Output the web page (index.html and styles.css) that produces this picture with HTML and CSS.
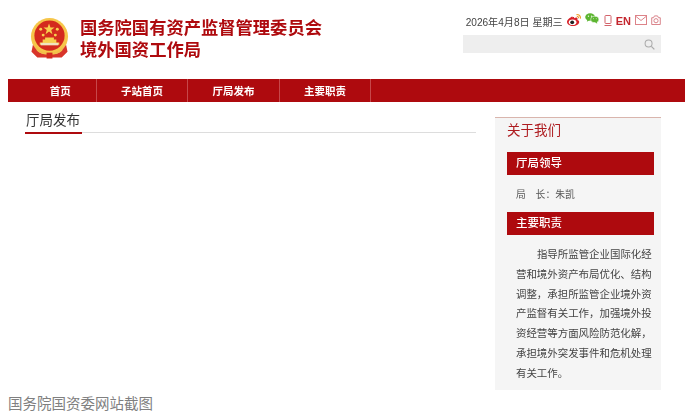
FILE: index.html
```html
<!DOCTYPE html>
<html lang="zh-CN">
<head>
<meta charset="utf-8">
<title>国务院国资委网站截图</title>
<link rel="stylesheet" href="styles.css">
</head>
<body>
<div class="shot">
  <header class="top">
    <div class="brand">
      <svg class="emblem" viewBox="0 0 40 42" aria-hidden="true">
        <circle cx="20" cy="18.500" r="19" fill="#f6c64a"/>
        <circle cx="20" cy="17.500" r="15.500" fill="#d42a1e"/>
        <polygon points="19.500,5 21,9.200 25.200,9.200 21.800,11.800 23,16 19.500,13.400 16,16 17.200,11.800 13.800,9.200 18,9.200" fill="#f8d04e"/>
        <circle cx="11" cy="11" r="1.500" fill="#f8d04e"/>
        <circle cx="28" cy="11" r="1.500" fill="#f8d04e"/>
        <circle cx="13.500" cy="17" r="1.500" fill="#f8d04e"/>
        <circle cx="26" cy="17" r="1.500" fill="#f8d04e"/>
        <path d="M10 27h20v-2.500h-3v-3h-2.500v-2h-9v2H13v3h-3z" fill="#f8d04e"/>
        <rect x="11" y="25" width="18" height="2.500" fill="#f0e4c0"/>
        <path d="M3 27c3 5 6 8 10 9h14c4-1 7-4 10-9l1.500 7-6 6H7.500l-6-6z" fill="#d8352a"/>
        <path d="M6 28c3 5 7 7 14 7s11-2 14-7l-1 5c-3 3-7 4-13 4s-10-1-13-4z" fill="#f2bf4a"/>
        <rect x="17" y="35" width="6" height="6" fill="#d42a1e"/>
      </svg>
      <h1 class="site-title">国务院国有资产监督管理委员会<br>境外国资工作局</h1>
    </div>
    <div class="tools">
      <div class="meta">
        <span class="date">2026年4月8日 星期三</span>
        <svg class="ico weibo" viewBox="0 0 14 12" aria-hidden="true">
          <path d="M5.500 2.500C3 3.300 0 5.800 0 8c0 2.200 2.700 4 5.800 4 3.700 0 6.400-2 6.400-4.100 0-1.300-1.200-1.800-1.800-1.900.3-.9.300-1.600-.1-2-.7-.7-2-.3-3.100.2 0-1-.4-1.500-1.700-.7z" fill="#d8232a"/>
          <ellipse cx="5.600" cy="8.200" rx="3.800" ry="2.800" fill="#fff"/>
          <circle cx="5.200" cy="8.300" r="1.900" fill="#222"/>
          <path d="M9.500 .6c2.400-.3 4.300 1.400 4 4M9.800 2.400c1.200-.1 2 .8 1.900 2" fill="none" stroke="#f0a030" stroke-width="1.100"/>
        </svg>
        <svg class="ico wechat" viewBox="0 0 15 11" aria-hidden="true">
          <ellipse cx="5.500" cy="4" rx="5.300" ry="4" fill="#5cb531"/>
          <path d="M2.500 6.500 2 9l3-2z" fill="#5cb531"/>
          <ellipse cx="10.500" cy="6.500" rx="4.300" ry="3.400" fill="#5cb531" stroke="#fff" stroke-width=".6"/>
          <path d="M12.500 9l.6 2-2.400-1.500z" fill="#5cb531"/>
          <circle cx="3.700" cy="3" r=".7" fill="#fff"/>
          <circle cx="7" cy="3" r=".7" fill="#fff"/>
          <circle cx="9" cy="5.800" r=".5" fill="#fff"/>
          <circle cx="12" cy="5.800" r=".5" fill="#fff"/>
        </svg>
        <svg class="ico phone" viewBox="0 0 8 11" aria-hidden="true">
          <rect x="1" y=".5" width="6" height="8" rx=".8" fill="none" stroke="#d2636b" stroke-width="1"/>
          <path d="M.5 10.500h7" stroke="#d2636b" stroke-width="1"/>
        </svg>
        <span class="en">EN</span>
        <svg class="ico mail" viewBox="0 0 12 10" aria-hidden="true">
          <rect x=".5" y=".5" width="11" height="9" fill="none" stroke="#dd8389" stroke-width="1"/>
          <path d="M1 1.500 6 5.500l5-4" fill="none" stroke="#dd8389" stroke-width="1"/>
        </svg>
        <svg class="ico cam" viewBox="0 0 11 11" aria-hidden="true">
          <path d="M.8 3h2L3.800 1h3.400l1 2h2v7.500H.8z" fill="none" stroke="#d98289" stroke-width="1.100"/>
          <circle cx="5.500" cy="6.300" r="2.300" fill="none" stroke="#d98289" stroke-width="1.100"/>
        </svg>
      </div>
      <div class="search">
        <svg class="search-ico" viewBox="0 0 12 12" aria-hidden="true">
          <circle cx="5" cy="5" r="3.800" fill="none" stroke="#aaa" stroke-width="1.100"/>
          <path d="M8 8l3.300 3.300" stroke="#aaa" stroke-width="1.400"/>
        </svg>
      </div>
    </div>
  </header>
  <nav class="nav">
    <a class="nav-item first">首页</a>
    <a class="nav-item">子站首页</a>
    <a class="nav-item">厅局发布</a>
    <a class="nav-item">主要职责</a>
  </nav>
  <div class="main">
    <section class="content">
      <div class="tab-line"><h2 class="tab">厅局发布</h2></div>
    </section>
    <aside class="side">
      <h3 class="side-title">关于我们</h3>
      <div class="side-bar">厅局领导</div>
      <p class="leader">局&emsp;长：朱凯</p>
      <div class="side-bar">主要职责</div>
      <p class="duty">指导所监管企业国际化经营和境外资产布局优化、结构调整，承担所监管企业境外资产监督有关工作，加强境外投资经营等方面风险防范化解，承担境外突发事件和危机处理有关工作。</p>
    </aside>
  </div>
</div>
<p class="caption">国务院国资委网站截图</p>
</body>
</html>
```
FILE: styles.css
```css
* { box-sizing: border-box; }
html, body { margin: 0; padding: 0; }
body {
  width: 697px;
  height: 420px;
  overflow: hidden;
  padding-left: 8px;
  background: #fff;
  font-family: "Liberation Sans", "Noto Sans CJK SC", sans-serif;
}
h1, h2, h3, p { margin: 0; }
.shot { width: 677px; filter: blur(.35px); }
.top {
  height: 79px;
  display: flex;
  justify-content: space-between;
  padding: 17px 24px 0 22px;
}
.brand { display: flex; gap: 11px; align-items: flex-start; }
.emblem { width: 39px; height: 42px; margin-top: 1px; }
.site-title {
  font-size: 17.300px;
  line-height: 22px;
  font-weight: 700;
  color: #ae0a0e;
}
.tools { width: 198px; margin-top: -5px; display: flex; flex-direction: column; gap: 5px; }
.meta {
  height: 18px;
  display: flex;
  align-items: center;
  justify-content: flex-end;
  gap: 4px;
}
.date { font-size: 10.100px; color: #444; white-space: nowrap; }
.ico { display: block; flex: none; margin-top: -2px; }
.weibo { width: 14px; height: 12px; }
.wechat { width: 14px; height: 11px; margin-top: -5px; }
.phone { width: 8px; height: 11px; margin-left: 1px; }
.en { font-size: 11px; font-weight: 700; color: #c4262e; margin-top: -1px; }
.mail { width: 12px; height: 10px; }
.cam { width: 10px; height: 10px; }
.search {
  height: 18px;
  background: #eee;
  display: flex;
  align-items: center;
  justify-content: flex-end;
  padding-right: 6px;
}
.search-ico { width: 11px; height: 11px; }
.nav {
  height: 23px;
  background: #ae0a0e;
  display: flex;
}
.nav-item {
  width: 91.500px;
  display: flex;
  align-items: center;
  justify-content: center;
  color: #fff;
  font-size: 10.500px;
  font-weight: 700;
  border-right: 1px solid #c6474a;
}
.nav-item.first { width: 88.700px; padding-left: 17px; }
.main {
  display: flex;
  align-items: flex-start;
  justify-content: space-between;
  padding: 0 24px 0 17px;
}
.content { width: 451px; padding-top: 9px; }
.tab-line { border-bottom: 1px solid #ddd; height: 22px; }
.tab {
  display: inline-block;
  height: 23px;
  padding: 0 2px 0 1px;
  font-size: 13.500px;
  line-height: 19px;
  font-weight: 400;
  color: #333;
  border-bottom: 2px solid #ae0a0e;
}
.side {
  width: 166px;
  height: 273px;
  margin-top: 15px;
  padding: 0 7px 0 12px;
  background: #f5f5f5;
  border-top: 1px solid #d9b5ad;
}
.side-title {
  height: 34px;
  font-size: 13.500px;
  line-height: 26px;
  font-weight: 400;
  color: #ae1c20;
}
.side-bar {
  height: 23px;
  padding-left: 9px;
  background: #ae0a0e;
  color: #fff;
  font-size: 11.500px;
  font-weight: 500;
  line-height: 23px;
}
.leader {
  height: 37px;
  padding-left: 9px;
  font-size: 9.800px;
  line-height: 39px;
  color: #555;
}
.duty {
  width: 146px;
  padding: 10px 0 0 9px;
  font-size: 10.450px;
  line-height: 19.800px;
  text-indent: 2em;
  color: #444;
}
.caption {
  margin-top: 4px;
  font-size: 14.500px;
  line-height: 20px;
  color: #808080;
}
```
